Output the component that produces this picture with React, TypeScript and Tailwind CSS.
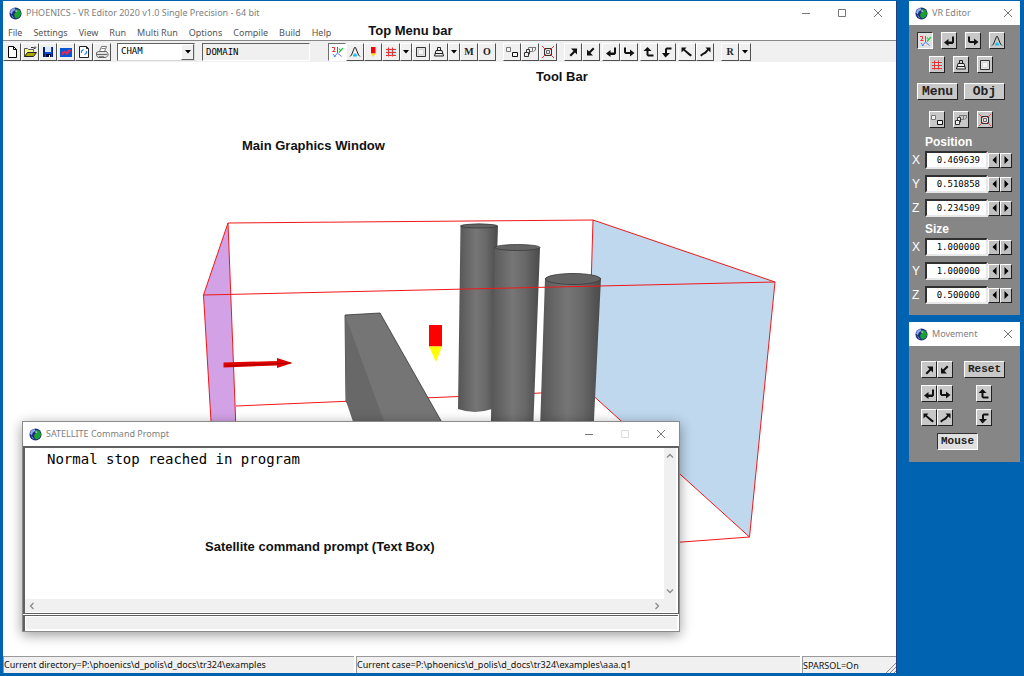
import React from 'react';
import clsx from 'clsx';

type IconName =
  | 'new' | 'open' | 'save' | 'chart' | 'reload' | 'print'
  | 'axes' | 'probe' | 'marker' | 'mesh' | 'box' | 'weight'
  | 'group' | 'stack' | 'target'
  | 'upRight' | 'downLeft' | 'turnLeft' | 'turnRight' | 'turnUp' | 'turnDown' | 'tiltLeft' | 'tiltRight';

const ICONS: Record<IconName, React.ReactNode> = {
  new: <path d="M4.5 2.5h5l3 3v8h-8zM9.5 2.5v3h3" fill="#fff" stroke="#000" />,
  open: (
    <>
      <path d="M2.5 12.5v-8h3l1 1h5v2" fill="#ffff90" stroke="#555" />
      <path d="M2.5 12.5l3-4h9l-3 4z" fill="#a8a800" stroke="#222" />
      <path d="M9 3.5h2l2 1v-2M13 4.5l1-1" fill="none" stroke="#000" strokeWidth="0.8" />
    </>
  ),
  save: (
    <>
      <path d="M3 3h10v10H3z" fill="#0050d0" />
      <path d="M5 3h6v5H5z" fill="#d8e8ff" />
      <path d="M3 3h2v10H3zM12 3h1v10h-1z" fill="#002080" />
      <path d="M6 10h5v3H6z" fill="#000040" />
      <path d="M9 11h1v2H9z" fill="#fff" />
    </>
  ),
  chart: (
    <>
      <path d="M2 4h12v9H2z" fill="#0058d8" />
      <path d="M4 8.500h3v-2M6 8l-2 3M9 6.500h4M12 6.500l-4 4M8 8.500h3" fill="none" stroke="#f02850" strokeWidth="1.4" />
    </>
  ),
  reload: (
    <>
      <path d="M3.5 2.5h7l2 2v9h-9zM10.5 2.5v2h2" fill="#fff" stroke="#222" />
      <path d="M5.5 9V7l2-1.500M10.500 7v2l-2 1.500" fill="none" stroke="#2080f0" strokeWidth="1.200" />
    </>
  ),
  print: (
    <>
      <path d="M5.500 7.500l2-5h5l-2 5" fill="#fff" stroke="#777" />
      <path d="M2.500 8.500l2-1h8l1.500 2v2l-2 2h-8l-1.500-2zM3 10.500h10" fill="#e0e0e0" stroke="#666" />
      <path d="M7.500 4.500h4M5 12.500h5" stroke="#888" />
    </>
  ),
  axes: (
    <>
      <path d="M3 3.500h2.500v2.500L3.500 7.500h3M8.500 3v6" fill="none" stroke="#f83030" />
      <path d="M10 4.500l1.500 2M14 4l-4 4.500" fill="none" stroke="#20d040" strokeWidth="1.200" />
      <path d="M8.500 9l-3.500 4M4 10l2.500 3M9 9.500l3.500 3" fill="none" stroke="#5080f0" />
    </>
  ),
  probe: (
    <>
      <path d="M3 12.500L4.500 11 7.500 3.500h1l3 7.500 1.500 1.500" fill="none" stroke="#222" />
      <path d="M7 9.500h2v1h1v2H6v-2h1z" fill="#20c0f0" />
    </>
  ),
  marker: (
    <>
      <path d="M6 3h4.500v6.500H6z" fill="#f00" />
      <path d="M6 9.500h4.500L8.250 13z" fill="#fd0" />
    </>
  ),
  mesh: (
    <>
      <path d="M3.500 4h9v8h-9z" fill="#a0f0f8" />
      <path d="M5.500 3.500v9M9.500 3.500v9M3 5.500h10M3 8.500h10M3 11.500h10" stroke="#f03030" />
    </>
  ),
  box: (
    <>
      <path d="M3.500 3.500h9v9h-9z" fill="#e4e4e4" stroke="#333" />
      <path d="M5.500 5.500h5v5h-5z" fill="#f4f4f4" stroke="#d4d4d4" />
    </>
  ),
  weight: (
    <>
      <path d="M6.500 3.500h3v3h-3z" fill="none" stroke="#222" />
      <path d="M5 6.500h6l1.500 5.500h-9zM4 9.500h8" fill="#eee" stroke="#222" />
    </>
  ),
  group: (
    <>
      <path d="M2.500 3.500h4v4h-4z" fill="#f4f4f4" stroke="#777" />
      <path d="M8.500 8.500h5v4h-5z" fill="#f4f4f4" stroke="#111" />
    </>
  ),
  stack: (
    <>
      <path d="M2.500 8.500h4v4h-4zM4.500 8V5.500h3v4.500H7" fill="#eee" stroke="#333" />
      <path d="M6.500 5V3.500h4v4H8M10.500 3.500h3M13.500 3v3l-2 1.500" fill="none" stroke="#777" />
    </>
  ),
  target: (
    <>
      <path d="M4.500 4.500h7v7h-7z" fill="#e8e8e8" stroke="#333" />
      <path d="M6.500 6.500h3v3h-3z" fill="none" stroke="#666" />
      <path d="M2 2l4 4M14 2l-4 4M2 14l4-4M14 14l-4-4" stroke="#f84040" />
    </>
  ),
  upRight: <path d="M6 4.500h6v6l-2-2L6 12.500 4.500 11l4-4z" />,
  downLeft: <path d="M10 11.500H4v-6l2 2 4-4L11.500 5l-4 4z" />,
  turnLeft: <path d="M11 3.500h2v6l-1.500 1.500H7.500V13L3 9.500 7.500 6v2.500H11z" />,
  turnRight: <path d="M3 3.500h2V8h4V5.500L13.500 9 9 12.500V10H4.500L3 8.500z" />,
  turnUp: <path d="M6.500 3L10.500 7H7.500v3.500h5v2H7L5.500 11V7H2.500z" />,
  turnDown: <path d="M12.500 3.500v2H8v3.500h3L6.500 13.500 3 9h3V5l1.500-1.500z" />,
  tiltLeft: <path d="M2.500 3.500h5L5.800 5.200 11 9.500l2 1.500-1.500 1.500L9.500 11 4.500 6.500l-2 2z" />,
  tiltRight: <path d="M13.500 3.500h-5l1.700 1.700L7.500 8 5 9.500l-2 1.500L4.500 12.500 6 11l3-1.500 2.500-3 2 2z" />,
};

function Icon({ name }: { name: IconName }) {
  return (
    <svg viewBox="0 0 16 16" className="size-4 shrink-0 fill-[#111111]" aria-hidden="true">
      {ICONS[name]}
    </svg>
  );
}

function Globe() {
  return (
    <svg viewBox="0 0 14 14" className="size-[13px] shrink-0" aria-hidden="true">
      <circle cx="7" cy="7" r="6.500" fill="#1c2a80" />
      <path d="M1 6l2-4 3-1 1 2-3 2-1 3z" fill="#8ea8f0" />
      <path d="M8 2l3.500 1.500L13 7l-1.500 3.500-3 2-2.500-1.500-.500-3.500 2-2z" fill="#1aa32c" />
      <path d="M7 3l2 1.500-2 1z" fill="#e0f0ff" />
      <path d="M3 9l2 3" stroke="#7090e0" />
    </svg>
  );
}

type ControlKind = 'minimize' | 'maximize' | 'close';

const CONTROL_PATHS: Record<ControlKind, string> = {
  minimize: 'M1 5.500h8',
  maximize: 'M1.500 1.500h7v7h-7z',
  close: 'M1 1l8 8M9 1l-8 8',
};

function WindowControl({ kind, narrow, faded }: { kind: ControlKind; narrow?: boolean; faded?: boolean }) {
  return (
    <button
      type="button"
      aria-label={kind}
      disabled={faded}
      className={clsx(
        'flex h-full items-center justify-center',
        narrow ? 'w-6' : 'w-9',
        faded ? 'text-[#dddddd]' : 'text-[#777777]',
      )}
    >
      <svg viewBox="0 0 10 10" className="size-[10px]" fill="none" stroke="currentColor">
        <path d={CONTROL_PATHS[kind]} />
      </svg>
    </button>
  );
}

function TitleBar({ title, palette, fixedSize }: { title: string; palette?: boolean; fixedSize?: boolean }) {
  return (
    <header className="flex h-6 shrink-0 items-center bg-white pl-[6px] text-[#808080]">
      <Globe />
      <h1 className="min-w-0 flex-1 truncate pl-1 font-['Noto_Sans',sans-serif] text-[9px]">{title}</h1>
      {!palette && <WindowControl kind="minimize" />}
      {!palette && <WindowControl kind="maximize" faded={fixedSize} />}
      <WindowControl kind="close" narrow={palette} />
    </header>
  );
}

function ToolButton({ icon, letter, pressed }: { icon?: IconName; letter?: string; pressed?: boolean }) {
  return (
    <button
      type="button"
      aria-label={icon ?? letter}
      className={clsx(
        'flex size-[18px] items-center justify-center border font-["Liberation_Serif",serif] text-[10px] font-bold text-[#222222]',
        pressed
          ? 'border-t-[#707070] border-r-white border-b-white border-l-[#707070] bg-white'
          : 'border-t-white border-r-[#505050] border-b-[#505050] border-l-white bg-[#f0f0f0]',
      )}
    >
      {icon ? <Icon name={icon} /> : letter}
    </button>
  );
}

function DropButton() {
  return (
    <button
      type="button"
      aria-label="More"
      className="flex h-[18px] w-3 items-center justify-center border border-t-white border-r-[#505050] border-b-[#505050] border-l-white bg-[#f0f0f0]"
    >
      <svg viewBox="0 0 6 4" className="h-1 w-[6px]">
        <path d="M0 0h6L3 3.500z" />
      </svg>
    </button>
  );
}

const FILE_TOOLS: IconName[] = ['new', 'open', 'save', 'chart', 'reload', 'print'];
const MENUS = ['File', 'Settings', 'View', 'Run', 'Multi Run', 'Options', 'Compile', 'Build', 'Help'];
const MOVE_TOOLS: IconName[][] = [
  ['upRight', 'downLeft'],
  ['turnLeft', 'turnRight'],
  ['turnUp', 'turnDown'],
  ['tiltLeft', 'tiltRight'],
];

function Toolbar() {
  return (
    <div className="flex h-[22px] shrink-0 items-center border-t border-[#888888] bg-[#f0f0f0]">
      <div className="flex">
        {FILE_TOOLS.map((name) => (
          <ToolButton key={name} icon={name} />
        ))}
      </div>
      <div className="relative ml-[6px]">
        <select
          aria-label="Program"
          className="block h-[18px] w-[78px] appearance-none border border-t-[#606060] border-r-[#d8d8d8] border-b-[#d8d8d8] border-l-[#606060] bg-white pl-[3px] font-['DejaVu_Sans_Mono',monospace] text-[9px]"
        >
          <option>CHAM</option>
        </select>
        <span className="pointer-events-none absolute top-[1px] right-[1px] flex h-4 w-[13px] items-center justify-center border border-t-white border-r-[#606060] border-b-[#606060] border-l-white bg-[#f0f0f0]">
          <svg viewBox="0 0 6 4" className="h-1 w-[6px]">
            <path d="M0 0h6L3 3.500z" />
          </svg>
        </span>
      </div>
      <input
        aria-label="Object"
        defaultValue="DOMAIN"
        className="ml-[7px] h-[18px] w-[108px] border border-t-[#606060] border-r-white border-b-white border-l-[#606060] bg-[#f0f0f0] pl-[3px] font-['DejaVu_Sans_Mono',monospace] text-[9px]"
      />
      <div className="ml-[18px] flex">
        <ToolButton icon="axes" pressed />
        <ToolButton icon="probe" />
        <ToolButton icon="marker" />
        <ToolButton icon="mesh" />
        <DropButton />
        <ToolButton icon="box" />
        <ToolButton icon="weight" />
        <DropButton />
        <ToolButton letter="M" />
        <ToolButton letter="O" />
      </div>
      <div className="ml-[7px] flex">
        <ToolButton icon="group" />
        <ToolButton icon="stack" />
        <ToolButton icon="target" />
      </div>
      <div className="ml-[7px] flex gap-[2px]">
        {MOVE_TOOLS.map((pair) => (
          <div key={pair[0]} className="flex">
            {pair.map((name) => (
              <ToolButton key={name} icon={name} />
            ))}
          </div>
        ))}
      </div>
      <div className="ml-[7px] flex">
        <ToolButton letter="R" />
        <DropButton />
      </div>
    </div>
  );
}

function Caption({ className, children }: { className?: string; children: React.ReactNode }) {
  return (
    <span
      className={clsx(
        'font-["Liberation_Sans",sans-serif] text-[13px] leading-4 font-bold whitespace-nowrap text-[#111111]',
        className,
      )}
    >
      {children}
    </span>
  );
}

function Scene() {
  return (
    <svg viewBox="3 62 893 593" className="block w-full" role="img" aria-label="Flow domain">
      <defs>
        <linearGradient id="pillar">
          <stop offset="0" stopColor="#555555" />
          <stop offset="0.450" stopColor="#767676" />
          <stop offset="0.700" stopColor="#686868" />
          <stop offset="1" stopColor="#4a4a4a" />
        </linearGradient>
      </defs>
      <g stroke="#f01818">
        <path d="M228 223L593 220M236 406L588 391" fill="none" />
        <path d="M593 220L775 282L749.500 537L588 391z" fill="#bfd8ee" />
        <path d="M749.500 537L211 577" fill="none" />
        <path d="M228 223L236 430L244 577L221 577L211 421L203.500 295z" fill="#d3a1e6" />
      </g>
      <path d="M345 315L380 313L470 472H388L346 401z" fill="#757575" stroke="#333" strokeWidth="0.800" />
      <path d="M345 315L384 421L404 472H370L346 401z" fill="#686868" />
      <path d="M460.500 226Q479 221 498 226L492 409Q475 415 458 409z" fill="url(#pillar)" />
      <path d="M495 248Q518 242 540 248L532 460H490z" fill="url(#pillar)" />
      <path d="M545 278Q573 269 601 278L592 460H539z" fill="url(#pillar)" />
      <g fill="#646464" stroke="#3a3a3a" strokeWidth="0.800">
        <ellipse cx="479" cy="226" rx="18.500" ry="2" />
        <ellipse cx="517.500" cy="247.500" rx="22.500" ry="3" />
        <ellipse cx="573" cy="279" rx="27.500" ry="5.500" />
      </g>
      <path d="M203.500 295L775 282" stroke="#f01818" />
      <path d="M223.500 362.500L277 361V358L292.500 363L277 368V365.500L223.500 367.500z" fill="#e00000" />
      <path d="M226 366L291 363" stroke="#a80000" />
      <path d="M429 325h13v21.500h-13z" fill="#f00" />
      <path d="M429 346.500h13L436 362z" fill="#ff0" />
    </svg>
  );
}

function ScrollMark({ d }: { d: string }) {
  return (
    <svg viewBox="0 0 8 8" className="size-2" fill="none" stroke="#8a8a8a" strokeWidth="1.300">
      <path d={d} />
    </svg>
  );
}

function CommandPrompt() {
  return (
    <section className="absolute top-[421px] left-[22px] flex h-[211px] w-[658px] flex-col border border-[#8a8a8a] bg-white shadow-[0_3px_12px_rgba(0,0,0,0.4)]">
      <TitleBar title="SATELLITE Command Prompt" fixedSize />
      <div className="flex flex-1 border-t-2 border-r border-b border-l-2 border-[#606060]">
        <div className="flex flex-1 flex-col">
          <pre className="pl-[22px] font-['DejaVu_Sans_Mono',monospace] text-[14px] leading-[22px]">
            Normal stop reached in program
          </pre>
          <Caption className="mt-[69px] pl-[180px]">Satellite command prompt (Text Box)</Caption>
          <div className="mt-auto mb-[1px] flex h-[13px] items-center justify-between bg-[#f0f0f0] px-[3px]">
            <ScrollMark d="M5.500 1L2.500 4L5.500 7" />
            <ScrollMark d="M2.500 1L5.500 4L2.500 7" />
          </div>
        </div>
        <div className="mr-[2px] mb-[1px] flex w-3 flex-col items-center justify-between bg-[#f0f0f0] pt-1 pb-[17px]">
          <ScrollMark d="M1 5.500L4 2.500L7 5.500" />
          <ScrollMark d="M1 2.500L4 5.500L7 2.500" />
        </div>
      </div>
      <div className="mt-[1px] mr-[1px] h-4 shrink-0 border-t border-l-2 border-[#606060] bg-white pt-[1px] pr-[1px] pb-[2px] pl-[1px]">
        <div className="h-full bg-[#f0f0f0]" />
      </div>
    </section>
  );
}

function StatusBar() {
  return (
    <footer className="flex h-[17px] shrink-0 gap-[2px] bg-white font-['Noto_Sans',sans-serif] text-[9px] leading-[15px] text-[#111111]">
      <p className="w-[351px] truncate border-t border-l border-[#999999] bg-[#f0f0f0]">
        Current directory=P:\phoenics\d_polis\d_docs\tr324\examples
      </p>
      <p className="min-w-0 flex-1 truncate border-t border-l border-[#999999] bg-[#f0f0f0]">
        Current case=P:\phoenics\d_polis\d_docs\tr324\examples\aaa.q1
      </p>
      <div className="flex w-[94px] items-end justify-between border-t border-l border-[#999999] bg-[#f0f0f0]">
        <p>SPARSOL=On</p>
        <svg viewBox="0 0 10 10" className="size-[10px]" stroke="#888">
          <path d="M0 10L10 0M4 10L10 4M8 10L10 8" />
        </svg>
      </div>
    </footer>
  );
}

function PanelButton({ icon, label, pressed, small }: { icon?: IconName; label?: string; pressed?: boolean; small?: boolean }) {
  return (
    <button
      type="button"
      aria-label={icon ?? label}
      className={clsx(
        'flex h-[17px] items-center justify-center border font-["Liberation_Mono",monospace] leading-none font-bold text-[#222222]',
        icon ? 'w-4' : 'w-[41px]',
        small ? 'text-[11px]' : 'text-[13px]',
        pressed
          ? 'border-t-[#303030] border-r-white border-b-white border-l-[#303030] bg-[#e0e0e0]'
          : 'border-t-white border-r-[#202020] border-b-[#202020] border-l-white bg-[#c8c8c8]',
      )}
    >
      {icon ? <Icon name={icon} /> : label}
    </button>
  );
}

function Stepper({ direction }: { direction: 'left' | 'right' }) {
  return (
    <button
      type="button"
      aria-label={direction === 'left' ? 'Decrease' : 'Increase'}
      className="flex h-[15px] w-3 items-center justify-center border border-t-white border-r-[#202020] border-b-[#202020] border-l-white bg-[#c0c0c0]"
    >
      <svg viewBox="0 0 5 8" className="h-2 w-[5px]">
        <path d={direction === 'left' ? 'M4.500 0v8L0.500 4z' : 'M0.500 0v8L4.500 4z'} />
      </svg>
    </button>
  );
}

function AxisFields({ title, values }: { title: string; values: [string, string, string] }) {
  return (
    <fieldset>
      <legend className="ml-[13px] h-[17px] font-['Liberation_Sans',sans-serif] text-[12px] leading-4 font-bold text-white">
        {title}
      </legend>
      <div className="flex flex-col gap-[6px]">
        {['X', 'Y', 'Z'].map((axis, i) => (
          <div key={axis} className="flex h-[18px] items-center">
            <label
              htmlFor={`${title}-${axis}`}
              className="w-[13px] font-['Liberation_Sans',sans-serif] text-[12px] leading-4 text-white"
            >
              {axis}
            </label>
            <input
              id={`${title}-${axis}`}
              defaultValue={values[i]}
              className="h-[18px] w-[63px] border-2 border-t-[#303030] border-r-[#e8e8e8] border-b-[#e8e8e8] border-l-[#303030] bg-white pr-[6px] text-right font-['DejaVu_Sans_Mono',monospace] text-[9px] text-black"
            />
            <Stepper direction="left" />
            <Stepper direction="right" />
          </div>
        ))}
      </div>
    </fieldset>
  );
}

function EditorPalette() {
  return (
    <section className="bg-[#868686]">
      <TitleBar title="VR Editor" palette />
      <div className="pt-[7px] pb-[11px] pl-[3px]">
        <div className="flex flex-col pl-[5px]">
          <div className="flex gap-2">
            <PanelButton icon="axes" pressed />
            <PanelButton icon="turnLeft" />
            <PanelButton icon="turnRight" />
            <PanelButton icon="probe" />
          </div>
          <div className="mt-[7px] flex gap-2 pl-3">
            <PanelButton icon="mesh" />
            <PanelButton icon="weight" />
            <PanelButton icon="box" />
          </div>
          <div className="mt-[10px] flex gap-[6px]">
            <PanelButton label="Menu" />
            <PanelButton label="Obj" />
          </div>
          <div className="mt-[11px] flex gap-2 pl-3">
            <PanelButton icon="group" />
            <PanelButton icon="stack" />
            <PanelButton icon="target" />
          </div>
        </div>
        <div className="flex flex-col gap-1 pt-[6px]">
          <AxisFields title="Position" values={['0.469639', '0.510858', '0.234509']} />
          <AxisFields title="Size" values={['1.000000', '1.000000', '0.500000']} />
        </div>
      </div>
    </section>
  );
}

function MovementPalette() {
  return (
    <section className="bg-[#868686]">
      <TitleBar title="Movement" palette />
      <div className="flex flex-col gap-[7px] pt-[15px] pb-3 pl-3">
        <div className="flex">
          <PanelButton icon="upRight" />
          <PanelButton icon="downLeft" />
          <div className="ml-[11px]">
            <PanelButton label="Reset" small />
          </div>
        </div>
        <div className="flex">
          <PanelButton icon="turnLeft" />
          <PanelButton icon="turnRight" />
          <div className="ml-[23px]">
            <PanelButton icon="turnUp" />
          </div>
        </div>
        <div className="flex">
          <PanelButton icon="tiltLeft" />
          <PanelButton icon="tiltRight" />
          <div className="ml-[23px]">
            <PanelButton icon="turnDown" />
          </div>
        </div>
        <div className="pl-4">
          <PanelButton label="Mouse" small pressed />
        </div>
      </div>
    </section>
  );
}

export default function App() {
  return (
    <main className="relative flex min-h-screen gap-3 overflow-hidden bg-[#0063b1] pt-[1px] pr-1 pb-[3px] pl-[3px]">
      <section className="flex min-w-0 flex-1 flex-col border-r border-[#204080] bg-white">
        <TitleBar title="PHOENICS - VR Editor 2020 v1.0 Single Precision - 64 bit" />
        <nav className="flex h-[15px] shrink-0 items-center gap-[11px] pl-[5px] font-['Noto_Sans',sans-serif] text-[9px] text-[#555555]">
          {MENUS.map((menu) => (
            <button key={menu} type="button" className="whitespace-nowrap">
              {menu}
            </button>
          ))}
          <Caption className="pb-[3px] pl-[26px]">Top Menu bar</Caption>
        </nav>
        <Toolbar />
        <div className="relative flex-1">
          <Scene />
          <Caption className="absolute top-[7px] left-[533px]">Tool Bar</Caption>
          <Caption className="absolute top-[76px] left-[239px]">Main Graphics Window</Caption>
        </div>
        <StatusBar />
      </section>
      <aside className="flex w-[111px] shrink-0 flex-col gap-[7px]">
        <EditorPalette />
        <MovementPalette />
      </aside>
      <CommandPrompt />
    </main>
  );
}
